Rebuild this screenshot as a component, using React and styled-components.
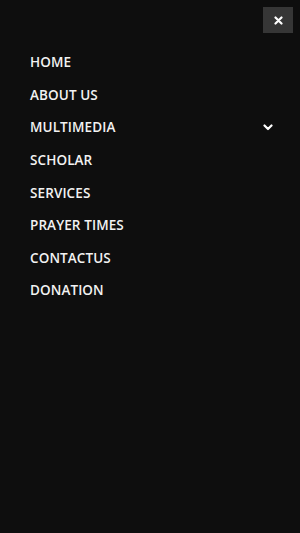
import React from 'react';
import styled, { createGlobalStyle } from 'styled-components';

const GlobalStyle = createGlobalStyle`
  html, body {
    margin: 0;
    padding: 0;
    background: #0e0e0e;
  }
  body {
    font-family: 'Open Sans', 'Liberation Sans', sans-serif;
  }
`;

const Drawer = styled.div`
  min-height: 533px;
  background: #0e0e0e;
  display: flex;
  flex-direction: column;
`;

const TopBar = styled.div`
  display: flex;
  justify-content: flex-end;
  padding: 7px 7px 0 0;
`;

const CloseButton = styled.button`
  width: 30px;
  height: 26px;
  border: none;
  background: #363636;
  display: flex;
  align-items: center;
  justify-content: center;
  padding: 0;
  cursor: pointer;
`;

const Menu = styled.ul`
  list-style: none;
  margin: 0;
  padding: 13px 27px 0 30px;
  display: flex;
  flex-direction: column;
`;

const Item = styled.li`
  height: 32.6px;
  display: flex;
  align-items: center;
  justify-content: space-between;
`;

const Link = styled.a`
  color: #f2f2f2;
  font-size: 13.5px;
  font-weight: 600;
  letter-spacing: 0.1px;
  text-transform: uppercase;
  text-decoration: none;
`;

const items = [
  { label: 'Home' },
  { label: 'About Us' },
  { label: 'Multimedia', sub: true },
  { label: 'Scholar' },
  { label: 'Services' },
  { label: 'Prayer Times' },
  { label: 'Contactus' },
  { label: 'Donation' },
];

const Chevron = () => (
  <svg width="10" height="7" viewBox="0 0 10 7">
    <path d="M1.5 1.5 L5 5 L8.5 1.5" stroke="#fff" strokeWidth="2.2" fill="none" strokeLinecap="round" strokeLinejoin="round" />
  </svg>
);

const CloseIcon = () => (
  <svg width="9" height="9" viewBox="0 0 9 9">
    <path d="M1.5 1.5 L7.5 7.5 M7.5 1.5 L1.5 7.5" stroke="#fff" strokeWidth="2.2" strokeLinecap="round" />
  </svg>
);

export default function App() {
  return (
    <>
      <GlobalStyle />
      <Drawer>
        <TopBar>
          <CloseButton aria-label="close">
            <CloseIcon />
          </CloseButton>
        </TopBar>
        <Menu>
          {items.map((it) => (
            <Item key={it.label}>
              <Link href="#">{it.label}</Link>
              {it.sub && <Chevron />}
            </Item>
          ))}
        </Menu>
      </Drawer>
    </>
  );
}
